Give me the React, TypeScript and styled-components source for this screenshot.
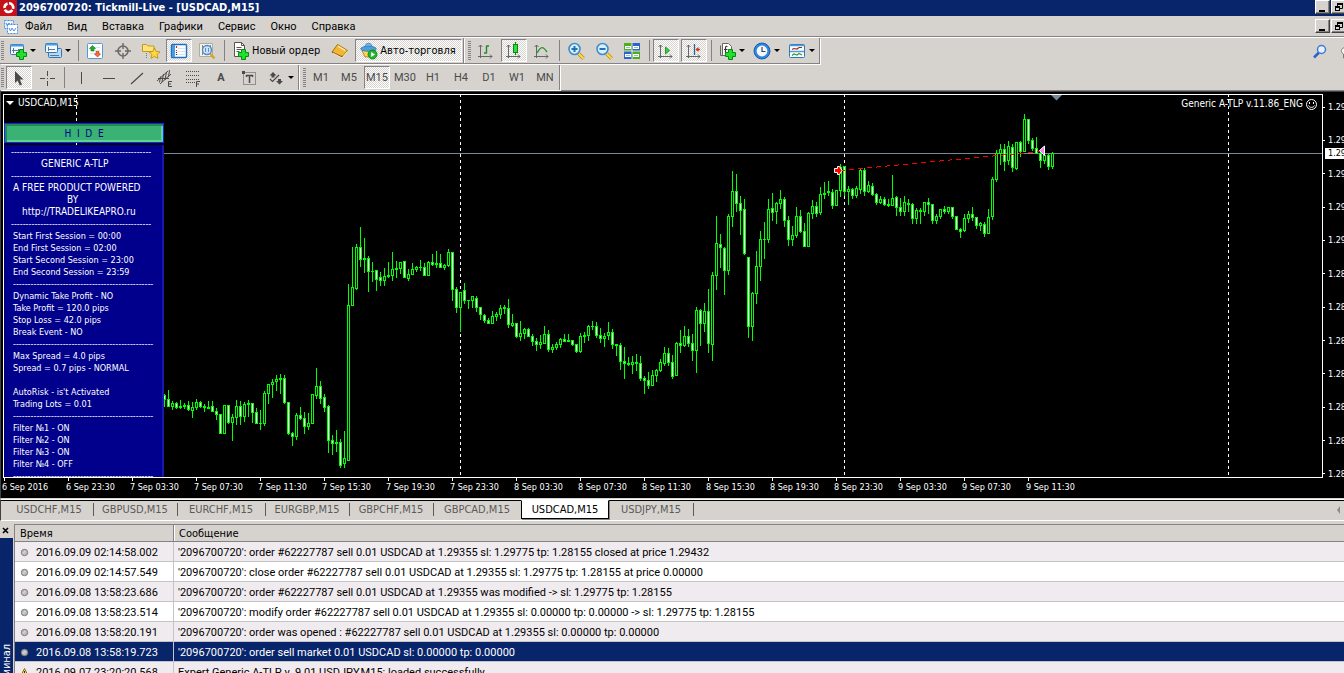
import React from "react";
import styled, { createGlobalStyle, css } from "styled-components";

const face = "#d6d3ce";
const shadow = "#848284";
const navy = "#08246b";
const lime = "#00ff00";
const condensed = `Tahoma, "DejaVu Sans Condensed", "DejaVu Sans", sans-serif`;

const GlobalStyle = createGlobalStyle`
  * { box-sizing: border-box; }
  body {
    margin: 0;
    background: ${face};
    font-family: Tahoma, Roboto, sans-serif;
    font-size: 11px;
    color: #000;
    overflow: hidden;
  }
  button { font: inherit; color: inherit; padding: 0; margin: 0; border: 0; background: none; }
`;

const AppFrame = styled.div`
  display: flex;
  flex-direction: column;
  height: 100vh;
  overflow: hidden;
`;

/* ---------- title and menu ---------- */

const TitleBar = styled.header`
  display: flex;
  align-items: center;
  flex: none;
  height: 16px;
  background: ${navy};
  color: #fff;
`;

const Title = styled.h1`
  flex: 1;
  margin: 0 0 0 2px;
  font-family: ${condensed};
  font-size: 11px;
  line-height: 14px;
  font-weight: bold;
  white-space: nowrap;
`;

const MenuBar = styled.nav`
  display: flex;
  align-items: center;
  flex: none;
  height: 22px;
  padding-left: 4px;
  border-bottom: 1px solid #fff;
  box-shadow: inset 0 -1px 0 ${shadow};
`;

const MenuItems = styled.div`
  display: flex;
  flex: 1;
`;

const MenuItem = styled.button`
  padding: 0 8px 0 7px;
  line-height: 20px;
`;

const WindowButtons = styled.div`
  display: flex;
  align-self: flex-start;
  gap: 1px;
  margin-right: -2px;
`;

const WindowButton = styled.button<{ $low?: boolean }>`
  width: 15px;
  height: 14px;
  margin-top: ${(p) => (p.$low ? 3 : 0)}px;
  background: ${face};
  border: 1px solid;
  border-color: #fff #424142 #424142 #fff;
  box-shadow: inset -1px -1px 0 ${shadow};
  display: flex;
  align-items: center;
  justify-content: center;
`;

/* ---------- toolbars ---------- */

const ToolRow = styled.div<{ $last?: boolean }>`
  display: flex;
  flex: none;
  height: 26px;
  ${(p) =>
    p.$last &&
    css`
      height: 27px;
      padding-top: 1px;
      border-bottom: 1px solid ${shadow};
    `}
`;

const ToolGroup = styled.div<{ $lined?: boolean }>`
  display: flex;
  align-items: center;
  border-right: 1px solid ${shadow};
  border-bottom: ${(p) => (p.$lined ? `1px solid ${shadow}` : "0")};
  box-shadow: 1px 1px 0 #fff;
`;

const Grip = styled.span<{ $wide?: boolean }>`
  width: 3px;
  height: 20px;
  margin: ${(p) => (p.$wide ? "0 1px 0 4px" : "0 1px 0 1px")};
  background: repeating-linear-gradient(${shadow} 0 1px, transparent 1px 2px);
`;

const Divider = styled.span`
  width: 1px;
  height: 21px;
  margin: 0 2px 0 3px;
  background: ${shadow};
`;

const pressedLook = css`
  border: 1px solid;
  border-color: ${shadow} #fff #fff ${shadow};
  background: repeating-conic-gradient(#fff 0 25%, ${face} 0 50%) 0 0 / 2px 2px;
`;

const ToolButton = styled.button<{ $pressed?: boolean; $faded?: boolean }>`
  display: flex;
  align-items: center;
  justify-content: center;
  width: 26px;
  height: 23px;
  margin: 0 1px;
  color: ${(p) => (p.$faded ? "#4a4a4a" : "#000")};
  ${(p) => p.$pressed && pressedLook}
`;

const TextButton = styled(ToolButton)`
  width: auto;
  padding: 0 5px 0 4px;
  gap: 2px;
  font-family: ${condensed};
  white-space: nowrap;
`;

const DropButton = styled(ToolButton)`
  width: 33px;
  justify-content: flex-start;
  padding-left: 3px;
  gap: 3px;
`;

const Caret = styled.span`
  border: 3px solid transparent;
  border-top-color: #000;
  border-bottom: 0;
`;

const ToolSearch = styled.div`
  display: flex;
  align-items: center;
  margin-left: auto;
  margin-right: -17px;
`;

/* ---------- chart ---------- */

const ChartWindow = styled.main`
  display: grid;
  grid-template: minmax(0, 1fr) 20px / minmax(0, 1fr) 21px;
  flex: 1;
  min-height: 0;
  padding: 2px 0 0 2px;
  background: #000;
  color: #fff;
  border-top: 1px solid #424142;
  border-left: 1px solid #424142;
  border-bottom: 1px solid ${face};
  font-family: ${condensed};
  font-size: 9px;
`;

const Plot = styled.section`
  position: relative;
  overflow: hidden;
  border: 1px solid #fff;
`;

const PlotArea = styled.svg`
  display: block;
  width: 100%;
  height: 100%;
`;

const ChartName = styled.div`
  position: absolute;
  top: 2px;
  left: 2px;
  display: flex;
  align-items: center;
  gap: 4px;
  font-size: 10px;
  line-height: 12px;
`;

const NameArrow = styled.span`
  border: 4px solid transparent;
  border-top-color: #fff;
  border-bottom: 0;
`;

const ExpertName = styled(ChartName)`
  top: 3px;
  left: auto;
  right: 5px;
  gap: 3px;
`;

const HideButton = styled.button`
  position: absolute;
  top: 28px;
  left: 0;
  width: 160px;
  height: 20px;
  background: #39b273;
  border: 1px solid #1820ff;
  box-shadow: inset 2px 2px 0 #218a52, inset -2px -2px 0 #5ad694;
  color: #00008c;
  font-size: 10px;
  white-space: pre;
`;

const InfoPanel = styled.div`
  position: absolute;
  top: 50px;
  left: 0;
  width: 160px;
  bottom: 0;
  padding: 1px 0 0 6px;
  overflow: hidden;
  background: #00008c;
  border-right: 2px solid #1818ad;
  border-left: 1px solid #00006b;
`;

const InfoLine = styled.div<{ $indent: number; $heading: boolean }>`
  height: 12px;
  line-height: 12px;
  font-size: ${(p) => (p.$heading ? 10 : 9)}px;
  padding-left: ${(p) => p.$indent}px;
  white-space: nowrap;
`;

const PriceAxis = styled.div`
  position: relative;
  display: flex;
  flex-direction: column;
  justify-content: space-between;
  padding-top: 7px;
  margin-bottom: -2px;
  overflow: hidden;
`;

const PriceLabel = styled.span`
  display: flex;
  align-items: center;
  gap: 3px;
  line-height: 12px;
  &::before {
    content: "";
    flex: none;
    width: 2px;
    height: 1px;
    background: #fff;
  }
`;

const PriceTag = styled.span`
  position: absolute;
  top: 54px;
  left: 2px;
  right: 0;
  padding-left: 3px;
  line-height: 11px;
  background: #fff;
  color: #000;
  overflow: hidden;
`;

const TimeAxis = styled.div`
  display: flex;
  grid-column: 1 / -1;
  padding-left: 1px;
`;

const TimeLabel = styled.span`
  position: relative;
  left: -2px;
  flex: none;
  width: 64px;
  line-height: 18px;
  white-space: nowrap;
  &::before {
    content: "";
    position: absolute;
    left: 2px;
    top: 0;
    width: 1px;
    height: 3px;
    background: #fff;
  }
`;

/* ---------- chart tabs ---------- */

const TabBar = styled.div`
  display: flex;
  align-items: flex-start;
  flex: none;
  height: 22px;
  padding: 0 4px;
  border-left: 1px solid #424142;
  border-top: 1px solid #fff;
  border-bottom: 1px solid #fff;
  box-shadow: inset 0 1px 0 #000;
  font-family: ${condensed};
`;

const Tab = styled.button<{ $wide?: boolean; $active?: boolean }>`
  position: relative;
  width: ${(p) => (p.$wide ? 88 : 84)}px;
  height: 19px;
  line-height: 17px;
  color: #5a5a5a;
  &::after {
    content: "";
    position: absolute;
    right: -1px;
    top: 3px;
    width: 1px;
    height: 13px;
    background: #5a5a5a;
  }
  ${(p) =>
    p.$active &&
    css`
      z-index: 1;
      background: #fff;
      color: #000;
      border: 1px solid #000;
      border-top-color: #fff;
      box-shadow: 1px 1px 0 ${shadow};
      &::after { display: none; }
    `}
`;

const TabScroll = styled.span`
  margin: 6px 0 0 auto;
  border: 4px solid transparent;
  border-right: 3px solid #8c8a8c;
  border-left: 0;
`;

/* ---------- terminal ---------- */

const Terminal = styled.section`
  display: flex;
  flex: none;
  height: 152px;
  padding-top: 3px;
`;

const TerminalSide = styled.div`
  display: flex;
  flex-direction: column;
  flex: none;
  width: 14px;
  border-right: 1px solid ${face};
`;

const CloseButton = styled.button`
  height: 14px;
  padding-right: 2px;
`;

const SideTitle = styled.h2`
  flex: 1;
  min-height: 0;
  margin: 0;
  padding-bottom: 106px;
  overflow: hidden;
  background: ${navy};
  color: #fff;
  font-family: ${condensed};
  font-size: 11px;
  font-weight: normal;
  line-height: 13px;
  writing-mode: vertical-rl;
  transform: rotate(180deg);
  display: flex;
  justify-content: flex-end;
`;

const LogBox = styled.div`
  flex: 1;
  min-width: 0;
  overflow: hidden;
  border-left: 1px solid ${shadow};
  border-top: 1px solid ${shadow};
`;

const LogTable = styled.table`
  width: 100%;
  table-layout: fixed;
  border-collapse: separate;
  border-spacing: 0;
`;

const HeadCell = styled.th<{ $time?: boolean }>`
  width: ${(p) => (p.$time ? "159px" : "auto")};
  height: 17px;
  padding: 2px 5px 0;
  line-height: 14px;
  text-align: left;
  font-family: ${condensed};
  font-weight: normal;
  border-bottom: 1px solid ${shadow};
  border-right: ${(p) => (p.$time ? `1px solid ${shadow}` : "0")};
  box-shadow: ${(p) => (p.$time ? "none" : "inset 1px 0 0 #fff")};
`;

const LogRow = styled.tr<{ $shade?: boolean; $selected?: boolean }>`
  background: ${(p) => (p.$selected ? navy : p.$shade ? "#f0ebef" : "#fff")};
  color: ${(p) => (p.$selected ? "#fff" : "#000")};
`;

const LogCell = styled.td<{ $time?: boolean }>`
  height: 20px;
  padding: ${(p) => (p.$time ? "2px 5px 0" : "2px 4px 0")};
  line-height: 17px;
  white-space: nowrap;
  border-bottom: 1px solid #c6c3c6;
  border-right: ${(p) => (p.$time ? "1px solid #c6c3c6" : "0")};
`;

const Stamp = styled.span`
  display: flex;
  align-items: center;
  gap: 7px;
`;

/* ---------- icons ---------- */

const IconSvg = styled.svg`
  flex: none;
`;

type IconProps = { children: React.ReactNode; w?: number; h?: number };
const Icon = ({ children, w = 18, h = 18 }: IconProps) => (
  <IconSvg width={w} height={h} viewBox={`0 0 ${w} ${h}`} fill="none" aria-hidden="true">
    {children}
  </IconSvg>
);

const Plus = ({ x, y }: { x: number; y: number }) => (
  <path
    transform={`translate(${x} ${y})`}
    d="M3.5 .5h4v3h3v4h-3v3h-4v-3h-3v-4h3z"
    fill="#1fe02c"
    stroke="#0a8a14"
  />
);

const TickmillLogo = () => (
  <Icon w={17} h={16}>
    <rect width="17" height="16" fill="#c4121a" />
    <path d="M9 3.2a4.3 4.3 0 0 1 4 5.6M12.3 10a4.3 4.3 0 0 1-7.5-.4M4.6 8A4.3 4.3 0 0 1 7.6 3.4" stroke="#fff" strokeWidth="2.6" />
  </Icon>
);
const ChartDocIcon = () => (
  <Icon w={14} h={16}>
    <rect x=".5" y="1.5" width="9" height="8" fill="#e8f2ff" stroke="#4b8de0" strokeDasharray="2 1" />
    <path d="M2 4l1.5 3 1.5-3 1.5 3L8 4" stroke="#4b8de0" />
    <rect x="3.5" y="5.5" width="10" height="9" fill="#fff" stroke="#4b8de0" strokeDasharray="2 1" />
    <path d="M5 9l1.5 3L8 9l2 3 2-3" stroke="#4b8de0" />
  </Icon>
);
const NewChartIcon = () => (
  <Icon>
    <rect x="1.5" y="2.5" width="13" height="10" rx="1" fill="#f4faff" stroke="#2f78b8" />
    <path d="M1.5 3.5h13" stroke="#4b9be0" strokeWidth="2" />
    <path d="M4.5 6v5M3 8.5h7M9 7l1.5 1.5L9 10" stroke="#5d7890" />
    <Plus x={7} y={7} />
  </Icon>
);
const ProfilesIcon = () => (
  <Icon>
    <rect x="4.5" y="6.5" width="13" height="9" rx="1" fill="#b8d8f4" stroke="#2f78b8" />
    <rect x="1.5" y="1.5" width="12" height="9" rx="1" fill="#f4faff" stroke="#2f78b8" />
    <path d="M1.5 2.5h12" stroke="#4b9be0" strokeWidth="2" />
    <path d="M4.5 5v4M4 7.5h7M6 13.5h9" stroke="#5d7890" />
  </Icon>
);
const MarketWatchIcon = () => (
  <Icon>
    <rect x="1.5" y="1.5" width="15" height="15" rx="1" fill="#fff" stroke="#4b9be0" />
    <path d="M4 5.5h10M4 8.5h10M4 11.5h10" stroke="#d5e4f2" />
    <path d="M6.5 3.5L9.5 6.5H8v2.5H5V6.5H3.5z" fill="#1fae2c" stroke="#0a7a14" strokeWidth=".6" />
    <path d="M11.5 15L8.5 12h1.5V9.5h3V12h1.5z" fill="#f2703a" stroke="#b03010" strokeWidth=".6" />
  </Icon>
);
const TargetIcon = () => (
  <Icon>
    <circle cx="9" cy="9" r="5" stroke="#6a6a6a" strokeWidth="1.6" />
    <path d="M9 1v6M9 11v6M1 9h6M11 9h6" stroke="#6a6a6a" strokeWidth="1.4" />
  </Icon>
);
const star = "M12.5 6l1.7 3.5 3.8.4-2.9 2.6.9 3.9-3.5-2-3.5 2 .9-3.9L7 9.900l3.800-.4z";
const NavigatorIcon = () => (
  <Icon>
    <path d="M.5 9.5v-7h4l1.5 1.5h6v5.5z" fill="#ffe37a" stroke="#c39a1c" />
    <path d="M4.5 11v6" stroke="#777" strokeDasharray="1 1" />
    <path d={star} fill="#ffd83a" stroke="#b98a10" strokeWidth=".8" />
  </Icon>
);
const DataWindowIcon = () => (
  <Icon>
    <rect x="1.5" y="2.5" width="15" height="13" rx="1" fill="#fff" stroke="#1f6fc0" strokeWidth="1.4" />
    <rect x="2" y="3" width="3" height="12" fill="#4b9be0" />
    <path d="M6.5 4v2M6.5 8v1" stroke="#e02020" strokeWidth="1.2" />
    <path d="M6.5 10v1M6.5 12v1" stroke="#333" strokeWidth="1.2" />
    <path d="M8 6.5h7M8 9.5h7M8 12.5h7" stroke="#d5e4f2" />
  </Icon>
);
const TesterIcon = () => (
  <Icon>
    <path d="M1.5 1.5h13v13h-13z" fill="#f5f2e8" stroke="#b0ac98" />
    <path d="M4.5 3v10M12.5 3v10" stroke="#888" />
    <circle cx="9" cy="8" r="4.5" fill="#c5e2ff" fillOpacity=".9" stroke="#4b8ac8" strokeWidth="1.3" />
    <path d="M7.5 6v4M10.5 6v4" stroke="#6d8db0" />
    <path d="M12.5 12l4 4.5" stroke="#d9a520" strokeWidth="2.5" />
  </Icon>
);
const NewOrderIcon = () => (
  <Icon>
    <path d="M2.5 .5h7l3 3v11h-10z" fill="#fff" stroke="#555" />
    <path d="M9.5 .5v3h3M4.5 5.5h5M4.5 7.5h5M4.5 9.5h3" stroke="#555" />
    <Plus x={6} y={7} />
  </Icon>
);
const BookIcon = () => (
  <Icon>
    <path d="M6.5 2.5l10 6-5.5 6.5-10-5z" fill="#f2b632" stroke="#a5700c" />
    <path d="M1 10l10 5v-1.5" stroke="#7a5208" />
    <path d="M7 4.2l7.5 4.5" stroke="#ffe9a0" strokeWidth="1.5" />
    <path d="M2 11l9 4.8 5.5-6.5" stroke="#fff0c0" strokeWidth=".8" />
  </Icon>
);
const ExpertIcon = () => (
  <Icon>
    <path d="M2 8.5l3 6.5 8-.5 2.5-6z" fill="#ffd34a" stroke="#a5781c" strokeWidth=".8" />
    <path d="M4.5 6.5c0-7 8-7 8 0z" fill="#6cb8ea" stroke="#2f78b8" strokeWidth=".8" />
    <ellipse cx="8.5" cy="6.8" rx="7.8" ry="2.5" fill="#4f9fd8" stroke="#2f78b8" strokeWidth=".8" />
    <circle cx="12.5" cy="12.5" r="4.5" fill="#23b52e" stroke="#0a7a14" strokeWidth=".8" />
    <path d="M11.2 10v5l3.8-2.5z" fill="#fff" />
  </Icon>
);
const axes = "M3.5 3v13M1 14.5h14M1.5 5l2-2 2 2M13 12.5l2 2-2 2";
const BarsIcon = () => (
  <Icon>
    <path d={axes} stroke="#666" />
    <path d="M9.5 3.5v8M7 11h2.5M9.5 4h2.5" stroke="#1c8a28" strokeWidth="1.4" />
  </Icon>
);
const CandlesIcon = () => (
  <Icon>
    <path d={axes} stroke="#666" />
    <path d="M10.5 0v13" stroke="#0a8a14" />
    <rect x="8.5" y="2.5" width="4" height="8" fill="#2be03a" stroke="#0a8a14" />
  </Icon>
);
const LineIcon = () => (
  <Icon>
    <path d={axes} stroke="#666" />
    <path d="M4 11c4-7 6-7 10-1" stroke="#1c9a28" strokeWidth="1.4" />
  </Icon>
);
const ZoomIcon = ({ plus }: { plus?: boolean }) => (
  <Icon>
    <path d="M11.5 11.5l5 5" stroke="#b98a10" strokeWidth="3.5" />
    <path d="M11.5 11.5l5 5" stroke="#ffd94a" strokeWidth="2" />
    <circle cx="7.5" cy="7" r="5.5" fill="#d8efff" stroke="#3a8fd0" strokeWidth="1.6" />
    <path d={plus ? "M4.5 7h6M7.5 4v6" : "M4.5 7h6"} stroke="#2a6fa8" strokeWidth="2" />
  </Icon>
);
const TileIcon = () => (
  <Icon>
    <path d="M1 1h8v8H1zM9 9h8v8H9z" fill="#4fae20" />
    <path d="M9 1h8v8H9zM1 9h8v8H1z" fill="#2e62c8" />
    <path d="M2 4h6v3H2zM10 4h6v3h-6zM2 12h6v3H2zM10 12h6v3h-6z" fill="#fff" />
    <path d="M3 5.5h4M11 5.5h4M3 13.5h4M11 13.5h4" stroke="#9bb" />
    <path d="M1 9h16M9 1v16" stroke="#fff" strokeWidth=".8" />
  </Icon>
);
const AutoScrollIcon = () => (
  <Icon>
    <path d={axes} stroke="#666" />
    <path d="M8.5 5v7l4-3.5z" fill="#2bd83a" stroke="#0a8a14" strokeWidth=".8" />
  </Icon>
);
const ShiftIcon = () => (
  <Icon>
    <path d={axes} stroke="#666" />
    <path d="M9.5 2v11" stroke="#2a5fa0" strokeWidth="1.3" />
    <path d="M11 7.5h4" stroke="#d03a10" strokeWidth="1.4" />
    <path d="M13.5 5v5l-3-2.5z" fill="#d03a10" />
  </Icon>
);
const IndicatorIcon = () => (
  <Icon>
    <path d="M4.5 1.5h6l3 3v9h-9z" fill="#fff" stroke="#666" />
    <path d="M2.5 3.5v10h6" stroke="#666" />
    <path d="M9.5 4.5c-2-1-2 1-2 2v5M6 7.5h3.5" stroke="#333" strokeWidth="1.2" />
    <Plus x={7} y={7} />
  </Icon>
);
const ClockIcon = () => (
  <Icon>
    <circle cx="9" cy="9" r="6.7" fill="#f2f8ff" stroke="#2f86e0" strokeWidth="2.6" />
    <circle cx="9" cy="9" r="8" stroke="#0f4a98" strokeWidth=".8" />
    <path d="M9 5v4.5h3.5" stroke="#444" strokeWidth="1.2" />
  </Icon>
);
const TemplateIcon = () => (
  <Icon>
    <rect x="1.5" y="2.5" width="15" height="13" rx="1" fill="#fff" stroke="#2f78b8" />
    <path d="M1.5 3.5h15M2 9.5h14" stroke="#4b9be0" strokeWidth="1.5" />
    <path d="M4 7.5l2-1 3 .5 2-1.5h3" stroke="#a02818" strokeWidth="1.2" />
    <path d="M4 13.5l2-1.5 3 1 2-1.5 3 1.5" stroke="#2a9a38" strokeWidth="1.2" />
  </Icon>
);
const SearchIcon = () => (
  <Icon w={15} h={15}>
    <path d="M2 13.5l5-5" stroke="#2a5fd0" strokeWidth="2.5" />
    <circle cx="9.5" cy="5.5" r="4" fill="#e6f0ff" stroke="#3f78d8" strokeWidth="1.5" />
  </Icon>
);
const BubbleIcon = () => (
  <Icon w={15} h={15}>
    <path d="M7.5 3c9 0 9 8 0 8l-4 3v-4C-1 7 2 3 7.5 3z" fill="#f4f4f4" stroke="#777" />
  </Icon>
);

const grey = "#4a4a4a";
const CursorIcon = () => (
  <Icon>
    <path d="M5 2l8.5 8.5H9.8l2.2 5-2.2 1-2.2-5L5 14z" fill={grey} />
  </Icon>
);
const CrossIcon = () => (
  <Icon><path d="M9.5 2v5M9.5 12v5M2 9.5h5M12 9.5h5M9 9.5h1" stroke={grey} /></Icon>
);
const VLineIcon = () => <Icon><path d="M9.5 3v12" stroke={grey} /></Icon>;
const HLineIcon = () => <Icon><path d="M3 9.5h12" stroke={grey} /></Icon>;
const TrendIcon = () => <Icon><path d="M3 15L15 4" stroke={grey} strokeWidth="1.2" /></Icon>;
const ChannelIcon = () => (
  <Icon>
    <path d="M1 12L12 2M4 15L15 5M4.5 7.5l-1 6M7.5 5l-1.5 8M10.5 3l-1.5 8M13.5 1l-1 7M2 9.5h11" stroke={grey} />
    <path d="M16 12.5h-3.5v5H16M12.5 15H15" stroke={grey} />
  </Icon>
);
const FiboIcon = () => (
  <Icon>
    <path d="M2 2.5h13M2 6.5h13M2 10.5h13M2 13.5h9" stroke={grey} strokeDasharray="1 1" />
    <path d="M16 12.5h-3.5V18M12.5 15H15" stroke={grey} />
  </Icon>
);
const LabelIcon = () => (
  <Icon>
    <rect x="3.5" y="3.5" width="12" height="12" stroke={grey} strokeDasharray="1 1" />
    <path d="M6 6.5h7M9.5 6.5V14M6.5 6v2M12.5 6v2" stroke={grey} strokeWidth="1.5" />
    <path d="M2 2h3v3H2z" fill={grey} />
  </Icon>
);
const ArrowsIcon = () => (
  <Icon>
    <path d="M6 3l3.5 3.5H7.5v2h-3v-2H2.5zM12.5 15.5L9 12h2v-2h3v2h2z" fill={grey} />
    <path d="M3 10l2.5 2.5L12 6" stroke={grey} strokeWidth="1.2" />
  </Icon>
);
const Bullet = () => (
  <Icon w={9} h={9}>
    <circle cx="4.5" cy="4.5" r="3.2" fill="#bdbdbd" stroke="#7b7b7b" />
    <path d="M3 5.5l2.5-2.5" stroke="#e8e8e8" />
  </Icon>
);
const WarningIcon = () => (
  <Icon w={9} h={9}>
    <path d="M4.5 .5L8.5 8.5h-8z" fill="#ffe92a" stroke="#77700a" />
    <path d="M4.5 3v3M4.5 7v1" stroke="#333" />
  </Icon>
);
const MinimizeGlyph = () => <Icon w={9} h={9}><path d="M1 8h6" stroke="#000" strokeWidth="2" /></Icon>;
const RestoreGlyph = () => (
  <Icon w={9} h={9}>
    <path d="M3.5 3V.5h5v5H6" stroke="#000" />
    <path d="M3 1h6" stroke="#000" strokeWidth="2" />
    <rect x="1.5" y="3.5" width="4" height="4" stroke="#000" />
    <path d="M1 4h5" stroke="#000" strokeWidth="2" />
  </Icon>
);
const Smiley = () => (
  <Icon w={11} h={11}>
    <circle cx="5.5" cy="5.5" r="5" stroke="#fff" />
    <path d="M3.5 3v2M7.5 3v2M2.5 6.5c1 2.5 5 2.5 6 0" stroke="#fff" />
  </Icon>
);

/* ---------- data ---------- */

const menu = ["Файл", "Вид", "Вставка", "Графики", "Сервис", "Окно", "Справка"];
const periods = ["M1", "M5", "M15", "M30", "H1", "H4", "D1", "W1", "MN"];
const prices = ["1.29610", "1.29475", "1.29340", "1.29205", "1.29070", "1.28935", "1.28800", "1.28665", "1.28530", "1.28395", "1.28260", "1.28125"];
const times = [
  "6 Sep 2016", "6 Sep 23:30", "7 Sep 03:30", "7 Sep 07:30", "7 Sep 11:30", "7 Sep 15:30",
  "7 Sep 19:30", "7 Sep 23:30", "8 Sep 03:30", "8 Sep 07:30", "8 Sep 11:30", "8 Sep 15:30",
  "8 Sep 19:30", "8 Sep 23:30", "9 Sep 03:30", "9 Sep 07:30", "9 Sep 11:30",
];
const tabs = [
  { name: "USDCHF,M15", wide: true },
  { name: "GBPUSD,M15" },
  { name: "EURCHF,M15", wide: true },
  { name: "EURGBP,M15" },
  { name: "GBPCHF,M15" },
  { name: "GBPCAD,M15", wide: true },
  { name: "USDCAD,M15", wide: true, active: true },
  { name: "USDJPY,M15" },
];

const rule = "-".repeat(48);
type Info = { text: string; indent?: number; heading?: boolean };
const info: Info[] = [
  { text: rule, indent: 0 },
  { text: "GENERIC A-TLP", indent: 30, heading: true },
  { text: rule, indent: 0 },
  { text: "A FREE PRODUCT POWERED", heading: true },
  { text: "BY", indent: 56, heading: true },
  { text: "http://TRADELIKEAPRO.ru", indent: 11, heading: true },
  { text: rule, indent: 0 },
  { text: "Start First Session = 00:00" },
  { text: "End First Session = 02:00" },
  { text: "Start Second Session = 23:00" },
  { text: "End Second Session = 23:59" },
  { text: rule },
  { text: "Dynamic Take Profit - NO" },
  { text: "Take Profit = 120.0 pips" },
  { text: "Stop Loss = 42.0 pips" },
  { text: "Break Event - NO" },
  { text: rule },
  { text: "Max Spread = 4.0 pips" },
  { text: "Spread = 0.7 pips - NORMAL" },
  { text: "" },
  { text: "AutoRisk - is't Activated" },
  { text: "Trading Lots = 0.01" },
  { text: rule },
  { text: "Filter №1 - ON" },
  { text: "Filter №2 - ON" },
  { text: "Filter №3 - ON" },
  { text: "Filter №4 - OFF" },
  { text: rule },
];

const log = [
  { time: "2016.09.09 02:14:58.002", text: "'2096700720': order #62227787 sell 0.01 USDCAD at 1.29355 sl: 1.29775 tp: 1.28155 closed at price 1.29432" },
  { time: "2016.09.09 02:14:57.549", text: "'2096700720': close order #62227787 sell 0.01 USDCAD at 1.29355 sl: 1.29775 tp: 1.28155 at price 0.00000" },
  { time: "2016.09.08 13:58:23.686", text: "'2096700720': order #62227787 sell 0.01 USDCAD at 1.29355 was modified -> sl: 1.29775 tp: 1.28155" },
  { time: "2016.09.08 13:58:23.514", text: "'2096700720': modify order #62227787 sell 0.01 USDCAD at 1.29355 sl: 0.00000 tp: 0.00000 -> sl: 1.29775 tp: 1.28155" },
  { time: "2016.09.08 13:58:20.191", text: "'2096700720': order was opened : #62227787 sell 0.01 USDCAD at 1.29355 sl: 0.00000 tp: 0.00000" },
  { time: "2016.09.08 13:58:19.723", text: "'2096700720': order sell market 0.01 USDCAD sl: 0.00000 tp: 0.00000", selected: true },
  { time: "2016.09.07 23:20:20.568", text: "Expert Generic A-TLP v. 9.01 USDJPY,M15: loaded successfully", warning: true },
];

// One candle per entry: high, body top, body bottom, low; "v" marks a falling bar.
const candleData = `
394 395 400 407v,390 399 407 407v,401 403 407 410,402 403 408 409v,400 406 408 409,403 405 407 409,401 405 410 411v,402 407 411 418,
399 402 408 410,401 402 407 408v,404 406 408 412,401 407 409 409,401 406 412 412v,408 411 415 420v,414 414 434 434v,405 405 434 434,
405 405 423 424v,414 417 423 441,400 406 418 425,401 406 417 425v,402 404 417 422,400 403 405 417,403 403 413 423v,408 412 424 424v,
410 423 424 430,391 393 424 426,384 384 394 404,379 382 385 398,375 379 382 391,374 378 380 394,375 378 403 404v,402 402 434 435v,
432 433 437 446v,413 415 437 440,407 415 419 420v,412 418 427 434v,413 423 427 430,394 394 424 424,368 386 396 399,381 386 399 404v,
394 397 408 412v,405 406 441 453v,435 440 444 455v,430 442 444 452,439 442 466 468v,431 458 464 468,284 305 461 461,247 287 306 306,
244 247 289 290,227 247 260 267v,238 258 260 273,256 258 272 292v,262 271 272 282,270 270 280 291v,272 277 281 286v,268 276 281 286,
262 275 277 278,252 269 276 281,261 268 270 278,262 262 269 274,261 261 278 278v,269 274 279 281,263 269 275 275,266 267 270 272,
260 267 268 271,263 267 276 276v,261 262 276 276,254 262 265 266v,251 263 265 268,254 263 268 268v,264 265 268 270,249 252 266 267,
252 252 290 301v,287 289 308 313v,292 292 308 332,283 290 301 304v,300 300 301 309,296 296 301 308,296 298 308 312v,307 307 315 320v,
314 315 321 323v,318 320 324 324v,311 316 324 324,312 314 317 321,305 308 315 319,305 307 309 314,299 308 325 328v,314 323 326 327,
323 323 337 338v,321 333 337 341,328 329 334 339,328 329 337 337v,334 336 342 346v,338 341 345 351v,335 342 345 349,326 334 344 344,
330 334 350 352v,344 347 350 353,342 344 348 350,338 339 345 348,334 339 342 342v,334 340 342 342,340 340 345 346v,344 344 352 353v,
333 336 352 353,332 335 337 343,325 326 336 341,321 326 327 330,322 326 336 338v,328 335 339 343v,333 336 339 347,322 332 336 340,
329 332 345 349v,344 344 346 356,343 345 362 370v,347 361 364 379v,357 363 365 366,356 362 365 374,354 362 364 371,356 363 379 381v,
376 378 381 394v,372 380 386 389v,370 375 386 386,369 370 376 382,359 362 371 372,347 353 364 366,348 353 363 366v,355 362 377 379v,
342 343 376 376,330 343 346 353v,326 336 346 347,329 336 344 347v,334 343 351 361v,307 310 351 373,309 310 324 346v,303 311 324 332,
289 311 344 353v,272 275 345 361,216 243 276 290,234 244 248 268v,247 248 271 295v,214 216 271 275,171 191 217 227,174 191 204 212v,
196 203 211 235v,199 209 254 255v,257 257 327 338v,292 293 327 341,251 266 294 304,231 239 267 281,222 239 240 259,199 209 240 243,
193 208 213 221v,202 203 212 224,190 199 204 209,197 199 221 227v,216 220 240 246v,226 235 240 246,207 216 236 238,210 216 232 233v,
223 231 247 247v,212 213 247 247,200 206 214 219,202 206 214 217v,187 194 213 215,182 193 195 199,181 191 193 196,189 192 206 209v,
190 190 206 206,164 167 191 197,166 166 192 196v,186 189 192 205,188 189 196 199v,186 188 196 198,168 170 190 194,168 170 192 196v,
181 185 192 193,183 186 195 196v,193 194 203 205v,196 199 203 204,197 199 205 206v,199 204 206 207,175 198 206 206,196 197 208 216v,
198 207 212 216v,196 202 212 216,199 203 205 212,203 204 219 224v,208 210 219 224,208 210 212 224,202 202 212 216,198 202 205 214v,
204 204 221 224v,214 216 221 224,209 209 217 219,206 209 212 214v,207 207 212 214,207 207 217 219v,216 216 230 230v,228 229 232 238v,
214 218 231 232,211 214 219 223,207 214 218 221v,217 217 226 229v,222 223 226 231,222 224 234 237v,209 217 234 234,177 179 217 220,
150 153 180 182,144 149 154 165,144 149 162 171v,141 146 161 165,144 147 168 172v,142 142 169 170,141 142 152 157v,114 119 152 152,
119 119 141 144v,138 140 149 151v,137 148 154 154v,152 153 161 168v,150 155 161 164,154 155 167 170v,152 153 167 169`;

const candles = candleData
  .replace(/\s*\n/g, "")
  .split(",")
  .map((entry) => {
    const falling = entry.endsWith("v");
    const [high, top, bottom, low] = entry.replace("v", "").trim().split(" ").map(Number);
    return { high, top, bottom, low, falling };
  });

const Candles = () => (
  <g shapeRendering="crispEdges">
    {candles.map((c, i) => {
      const x = 164 + i * 4;
      const body = c.bottom - c.top;
      return (
        <React.Fragment key={i}>
          <rect x={x} y={c.high} width="1" height={c.low - c.high} fill={lime} />
          <rect x={x - 1} y={c.top} width="3" height={body} fill={lime} />
          {body > 2 && (
            <rect x={x} y={c.top + 1} width="1" height={body - 2} fill={c.falling ? "#fff" : "#000"} />
          )}
        </React.Fragment>
      );
    })}
  </g>
);

const Chart = () => (
  <PlotArea role="img" aria-label="USDCAD M15">
    <g transform="translate(-4 -95)">
      {[76, 460, 844, 1228].map((x) => (
        <line key={x} x1={x + 0.5} x2={x + 0.5} y1="94" y2="2000" stroke="#fff" strokeDasharray="3 3" shapeRendering="crispEdges" />
      ))}
      <rect x="4" y="153" width="4000" height="1" fill="#778899" />
      <Candles />
      <path d="M840 170.5L1040 151.5" stroke="#f00" strokeDasharray="5 4" shapeRendering="crispEdges" />
      <path d="M834.5 168.5h3v-2h2l2.5 4-2.5 4h-2v-2h-3z" fill="#f00" stroke="#fff" />
      <path d="M1044.5 146v9.5l-5-5z" fill="#ee82ee" stroke="#fff" />
      <path d="M1051 95h11l-5.5 5.5z" fill="#778899" />
    </g>
  </PlotArea>
);

const App = () => (
  <>
    <GlobalStyle />
    <AppFrame>
      <TitleBar>
        <TickmillLogo />
        <Title>2096700720: Tickmill-Live - [USDCAD,M15]</Title>
        <WindowButtons>
          <WindowButton aria-label="Свернуть"><MinimizeGlyph /></WindowButton>
          <WindowButton aria-label="Восстановить"><RestoreGlyph /></WindowButton>
        </WindowButtons>
      </TitleBar>
      <MenuBar>
        <ChartDocIcon />
        <MenuItems>
          {menu.map((m) => <MenuItem key={m}>{m}</MenuItem>)}
        </MenuItems>
        <WindowButtons>
          <WindowButton $low aria-label="Свернуть график"><MinimizeGlyph /></WindowButton>
          <WindowButton $low aria-label="Восстановить график"><RestoreGlyph /></WindowButton>
        </WindowButtons>
      </MenuBar>
      <ToolRow>
        <ToolGroup $lined>
          <Grip />
          <DropButton aria-label="Новый график"><NewChartIcon /><Caret /></DropButton>
          <DropButton aria-label="Профили"><ProfilesIcon /><Caret /></DropButton>
          <Divider />
          <ToolButton aria-label="Обзор рынка"><MarketWatchIcon /></ToolButton>
          <ToolButton aria-label="Окно данных"><TargetIcon /></ToolButton>
          <ToolButton aria-label="Навигатор"><NavigatorIcon /></ToolButton>
          <ToolButton $pressed aria-label="Терминал"><DataWindowIcon /></ToolButton>
          <ToolButton aria-label="Тестер стратегий"><TesterIcon /></ToolButton>
          <Divider />
          <TextButton><NewOrderIcon />Новый ордер</TextButton>
          <ToolButton aria-label="Редактор"><BookIcon /></ToolButton>
          <TextButton $pressed><ExpertIcon />Авто-торговля</TextButton>
        </ToolGroup>
        <ToolGroup $lined>
          <Grip $wide />
          <ToolButton aria-label="Бары"><BarsIcon /></ToolButton>
          <ToolButton $pressed aria-label="Свечи"><CandlesIcon /></ToolButton>
          <ToolButton aria-label="Линия"><LineIcon /></ToolButton>
          <Divider />
          <ToolButton aria-label="Увеличить"><ZoomIcon plus /></ToolButton>
          <ToolButton aria-label="Уменьшить"><ZoomIcon /></ToolButton>
          <ToolButton aria-label="Окна рядом"><TileIcon /></ToolButton>
          <Divider />
          <ToolButton $pressed aria-label="Автопрокрутка"><AutoScrollIcon /></ToolButton>
          <ToolButton $pressed aria-label="Сдвиг графика"><ShiftIcon /></ToolButton>
          <Divider />
          <DropButton aria-label="Индикаторы"><IndicatorIcon /><Caret /></DropButton>
          <DropButton aria-label="Периоды"><ClockIcon /><Caret /></DropButton>
          <DropButton aria-label="Шаблоны"><TemplateIcon /><Caret /></DropButton>
        </ToolGroup>
        <ToolSearch>
          <ToolButton aria-label="Поиск"><SearchIcon /></ToolButton>
          <ToolButton aria-label="Сообщения"><BubbleIcon /></ToolButton>
        </ToolSearch>
      </ToolRow>
      <ToolRow $last>
        <ToolGroup>
          <Grip />
          <ToolButton $pressed aria-label="Курсор"><CursorIcon /></ToolButton>
          <ToolButton aria-label="Перекрестие"><CrossIcon /></ToolButton>
          <Divider />
          <ToolButton aria-label="Вертикальная линия"><VLineIcon /></ToolButton>
          <ToolButton aria-label="Горизонтальная линия"><HLineIcon /></ToolButton>
          <ToolButton aria-label="Трендовая линия"><TrendIcon /></ToolButton>
          <ToolButton aria-label="Канал"><ChannelIcon /></ToolButton>
          <ToolButton aria-label="Фибоначчи"><FiboIcon /></ToolButton>
          <ToolButton $faded><b>A</b></ToolButton>
          <ToolButton aria-label="Текстовая метка"><LabelIcon /></ToolButton>
          <DropButton aria-label="Стрелки"><ArrowsIcon /><Caret /></DropButton>
        </ToolGroup>
        <ToolGroup>
          <Grip $wide />
          {periods.map((p) => (
            <ToolButton key={p} $faded $pressed={p === "M15"}>{p}</ToolButton>
          ))}
        </ToolGroup>
      </ToolRow>
      <ChartWindow>
        <Plot>
          <Chart />
          <ChartName><NameArrow />USDCAD,M15</ChartName>
          <ExpertName>Generic A-TLP v.11.86_ENG<Smiley /></ExpertName>
          <HideButton>H  I  D  E</HideButton>
          <InfoPanel>
            {info.map(({ text, indent = 2, heading = false }, i) => (
              <InfoLine key={i} $indent={indent} $heading={heading}>{text}</InfoLine>
            ))}
          </InfoPanel>
        </Plot>
        <PriceAxis>
          {prices.map((p) => <PriceLabel key={p}>{p}</PriceLabel>)}
          <PriceTag>1.29424</PriceTag>
        </PriceAxis>
        <TimeAxis>
          {times.map((t) => <TimeLabel key={t}>{t}</TimeLabel>)}
        </TimeAxis>
      </ChartWindow>
      <TabBar>
        {tabs.map((t) => <Tab key={t.name} $wide={t.wide} $active={t.active}>{t.name}</Tab>)}
        <TabScroll />
      </TabBar>
      <Terminal>
        <TerminalSide>
          <CloseButton aria-label="Закрыть">
            <Icon w={8} h={8}><path d="M1 1l5 5M6 1L1 6" stroke="#000" strokeWidth="1.6" /></Icon>
          </CloseButton>
          <SideTitle>Терминал</SideTitle>
        </TerminalSide>
        <LogBox>
          <LogTable>
            <thead>
              <tr><HeadCell $time>Время</HeadCell><HeadCell>Сообщение</HeadCell></tr>
            </thead>
            <tbody>
              {log.map((r, i) => (
                <LogRow key={r.time} $shade={i % 2 === 0} $selected={r.selected}>
                  <LogCell $time><Stamp>{r.warning ? <WarningIcon /> : <Bullet />}{r.time}</Stamp></LogCell>
                  <LogCell>{r.text}</LogCell>
                </LogRow>
              ))}
            </tbody>
          </LogTable>
        </LogBox>
      </Terminal>
    </AppFrame>
  </>
);

export default App;
